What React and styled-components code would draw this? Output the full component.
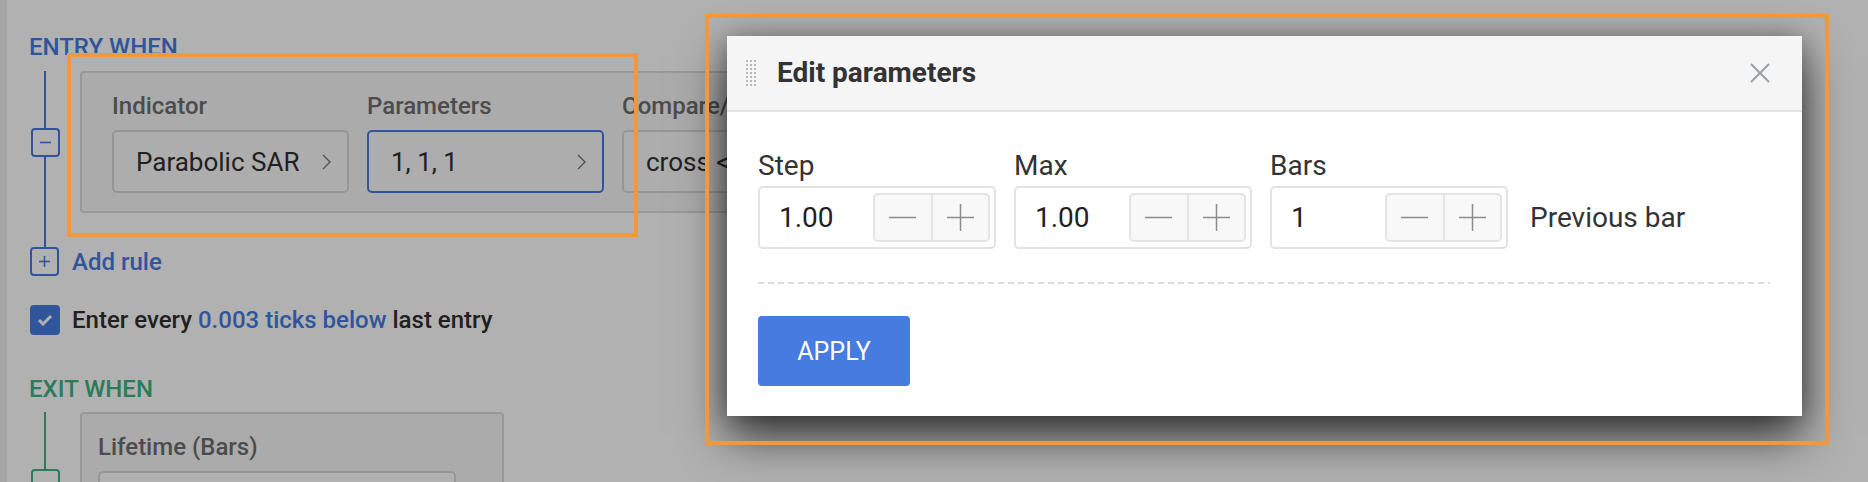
import React from 'react';
import styled, { createGlobalStyle } from 'styled-components';

const BLUE = '#467be0';
const GREEN = '#40b381';
const ORANGE = '#f2973a';

const GlobalStyle = createGlobalStyle`
  html, body { margin: 0; padding: 0; }
  body {
    width: 1868px;
    height: 482px;
    overflow: hidden;
    background: #fff;
    font-family: Roboto, "Noto Sans", "Liberation Sans", Arial, sans-serif;
  }
  #root { height: 482px; }
  * { box-sizing: border-box; }
`;

const Page = styled.div`
  position: relative;
  display: flex;
  width: 1868px;
  height: 482px;
  overflow: hidden;
  background: #fff;
`;

const SideStrip = styled.div`
  width: 7px;
  flex: none;
  background: #efefef;
`;

const Builder = styled.main`
  flex: 1;
  display: flex;
  flex-direction: column;
  padding: 33px 0 0 22px;
`;

const SectionTitle = styled.h2`
  margin: ${p => p.$mt || 0}px 0 0;
  font-size: 24px;
  line-height: 28px;
  font-weight: 500;
  text-transform: uppercase;
  color: ${p => p.$color};
`;

const Tree = styled.div`
  display: flex;
  flex-direction: column;
  margin: ${p => p.$mt}px 0 0 1px;
`;

const RuleRow = styled.div`
  display: flex;
  align-items: stretch;
  gap: 20px;
`;

const Rail = styled.div`
  width: 30px;
  flex: none;
  display: flex;
  flex-direction: column;
  align-items: center;
  height: ${p => (p.$h ? `${p.$h}px` : 'auto')};
`;

const Segment = styled.div`
  width: 2px;
  flex: 1;
  background: ${p => p.$color};
`;

const ToggleBox = styled.div`
  width: 29px;
  height: 29px;
  flex: none;
  border: 2px solid ${p => p.$color};
  border-radius: 4px;
  background: #fff;
  display: flex;
  align-items: center;
  justify-content: center;
`;

const Card = styled.div`
  display: flex;
  gap: 18px;
  width: ${p => (p.$w ? `${p.$w}px` : 'auto')};
  padding: 19px ${p => p.$px}px 18px;
  border: 2px solid #dcdcdc;
  border-radius: 4px;
  background: #f7f7f7;
`;

const Field = styled.div`
  display: flex;
  flex-direction: column;
  gap: 10px;
  width: ${p => p.$w}px;
  flex: none;
`;

const FieldLabel = styled.div`
  font-size: 24px;
  line-height: 28px;
  font-weight: 500;
  color: #6e6e6e;
  white-space: nowrap;
`;

const SelectButton = styled.div`
  height: 63px;
  display: flex;
  align-items: center;
  justify-content: space-between;
  padding: 0 16px 0 22px;
  border: 2px solid ${p => (p.$active ? BLUE : '#d9d9d9')};
  border-radius: 5px;
  background: #fafafa;
  font-size: 26px;
  color: #303030;
  white-space: nowrap;
  overflow: hidden;
`;

const TextInput = styled.div`
  height: 63px;
  border: 2px solid #d9d9d9;
  border-radius: 5px;
  background: #fff;
`;

const AddRow = styled.div`
  display: flex;
  align-items: center;
  gap: 13px;
`;

const LinkLabel = styled.span`
  font-size: 24px;
  line-height: 28px;
  font-weight: 500;
  color: ${BLUE};
`;

const CheckRow = styled.div`
  display: flex;
  align-items: center;
  gap: 12px;
  margin: 29px 0 0 1px;
`;

const CheckBox = styled.div`
  width: 30px;
  height: 30px;
  border-radius: 4px;
  background: ${BLUE};
  display: flex;
  align-items: center;
  justify-content: center;
`;

const CheckText = styled.span`
  font-size: 24px;
  line-height: 28px;
  font-weight: 500;
  color: #303030;
`;

const Accent = styled.span`
  color: ${BLUE};
`;

const Overlay = styled.div`
  position: absolute;
  inset: 0;
  background: rgba(0, 0, 0, 0.305);
`;

const Modal = styled.section`
  position: absolute;
  left: 727px;
  top: 36px;
  width: 1075px;
  background: #fff;
  box-shadow: 0 20px 44px rgba(0, 0, 0, 0.72), 0 0 20px rgba(0, 0, 0, 0.22);
`;

const ModalHeader = styled.header`
  height: 76px;
  display: flex;
  align-items: center;
  padding: 0 32px 0 19px;
  background: #f5f5f5;
  border-bottom: 2px solid #e2e2e2;
`;

const ModalTitle = styled.h3`
  margin: 0 0 0 21px;
  font-size: 28px;
  line-height: 34px;
  font-weight: 700;
  color: #333;
`;

const CloseButton = styled.button`
  margin-left: auto;
  width: 20px;
  height: 20px;
  padding: 0;
  border: 0;
  background: none;
  display: flex;
`;

const ModalBody = styled.div`
  padding: 37px 32px 30px 31px;
`;

const ParamRow = styled.div`
  display: flex;
  align-items: flex-end;
  gap: 18px;
`;

const ParamField = styled.div`
  display: flex;
  flex-direction: column;
  gap: 4px;
  width: 238px;
`;

const ParamLabel = styled.label`
  font-size: 28px;
  line-height: 33px;
  color: #333;
`;

const NumberBox = styled.div`
  height: 63px;
  display: flex;
  align-items: center;
  justify-content: space-between;
  padding: 0 4px 0 19px;
  border: 2px solid #e2e2e2;
  border-radius: 5px;
`;

const NumberValue = styled.span`
  font-size: 28px;
  color: #222;
`;

const Stepper = styled.div`
  width: 117px;
  height: 49px;
  display: flex;
  border: 2px solid #e4e4e4;
  border-radius: 5px;
  background: #f8f8f8;
  overflow: hidden;
`;

const StepButton = styled.div`
  flex: 1;
  display: flex;
  align-items: center;
  justify-content: center;
  & + & {
    border-left: 2px solid #e4e4e4;
  }
`;

const Hint = styled.span`
  height: 63px;
  line-height: 63px;
  margin-left: 4px;
  font-size: 28px;
  color: #333;
`;

const Divider = styled.div`
  height: 2px;
  margin: 33px 0 32px;
  background: repeating-linear-gradient(to right, #dcdcdc 0 6px, transparent 6px 10px);
`;

const ApplyButton = styled.button`
  width: 152px;
  height: 70px;
  border: 0;
  border-radius: 4px;
  background: ${BLUE};
  color: #fff;
  font-family: inherit;
  font-size: 25px;
  font-weight: 400;
  padding: 0;
`;

const Highlight = styled.div`
  position: absolute;
  left: ${p => p.$x}px;
  top: ${p => p.$y}px;
  width: ${p => p.$w}px;
  height: ${p => p.$h}px;
  border: 4px solid ${ORANGE};
  pointer-events: none;
`;

const Chevron = () => (
  <svg width="9" height="16" viewBox="0 0 9 16" fill="none">
    <polyline points="1,1 8,8 1,15" stroke="#777" strokeWidth="1.4" />
  </svg>
);

const MinusGlyph = ({ color, size = 11 }) => (
  <svg width={size} height={size} viewBox="0 0 11 11">
    <line x1="0" y1="5.5" x2="11" y2="5.5" stroke={color} strokeWidth="1.6" />
  </svg>
);

const PlusGlyph = ({ color, size = 11 }) => (
  <svg width={size} height={size} viewBox="0 0 11 11">
    <line x1="0" y1="5.5" x2="11" y2="5.5" stroke={color} strokeWidth="1.6" />
    <line x1="5.5" y1="0" x2="5.5" y2="11" stroke={color} strokeWidth="1.6" />
  </svg>
);

const StepMinus = () => (
  <svg width="27" height="27" viewBox="0 0 27 27">
    <line x1="0" y1="13.5" x2="27" y2="13.5" stroke="#8c8c8c" strokeWidth="1.5" />
  </svg>
);

const StepPlus = () => (
  <svg width="27" height="27" viewBox="0 0 27 27">
    <line x1="0" y1="13.5" x2="27" y2="13.5" stroke="#8c8c8c" strokeWidth="1.5" />
    <line x1="13.5" y1="0" x2="13.5" y2="27" stroke="#8c8c8c" strokeWidth="1.5" />
  </svg>
);

const DragHandle = () => (
  <svg width="10" height="26" viewBox="0 0 10 26">
    {[0, 1, 2, 3, 4, 5, 6].map(r =>
      [0, 1, 2].map(c => (
        <rect key={`${r}-${c}`} x={c * 4} y={r * 4} width="2" height="2" fill="#b9b9b9" />
      ))
    )}
  </svg>
);

const CloseIcon = () => (
  <svg width="20" height="20" viewBox="0 0 20 20">
    <line x1="1" y1="1" x2="19" y2="19" stroke="#9aa0a6" strokeWidth="2.2" />
    <line x1="19" y1="1" x2="1" y2="19" stroke="#9aa0a6" strokeWidth="2.2" />
  </svg>
);

const CheckIcon = () => (
  <svg width="16" height="12" viewBox="0 0 16 12">
    <polyline points="2,6 6,10 14,2" fill="none" stroke="#fff" strokeWidth="3" />
  </svg>
);

const params = [
  { label: 'Step', value: '1.00' },
  { label: 'Max', value: '1.00' },
  { label: 'Bars', value: '1' },
];

export default function App() {
  return (
    <>
      <GlobalStyle />
      <Page>
        <SideStrip />
        <Builder>
          <SectionTitle $color={BLUE}>Entry when</SectionTitle>
          <Tree $mt={10}>
            <RuleRow>
              <Rail>
                <Segment $color={BLUE} />
                <ToggleBox $color={BLUE}>
                  <MinusGlyph color={BLUE} />
                </ToggleBox>
                <Segment $color={BLUE} />
              </Rail>
              <Card $px={30}>
                <Field $w={237}>
                  <FieldLabel>Indicator</FieldLabel>
                  <SelectButton>
                    <span>Parabolic SAR</span>
                    <Chevron />
                  </SelectButton>
                </Field>
                <Field $w={237}>
                  <FieldLabel>Parameters</FieldLabel>
                  <SelectButton $active>
                    <span>1, 1, 1</span>
                    <Chevron />
                  </SelectButton>
                </Field>
                <Field $w={237}>
                  <FieldLabel>Compare/Value</FieldLabel>
                  <SelectButton>
                    <span>cross &lt;</span>
                    <Chevron />
                  </SelectButton>
                </Field>
              </Card>
            </RuleRow>
            <Rail $h={34}>
              <Segment $color={BLUE} />
            </Rail>
            <AddRow>
              <ToggleBox $color={BLUE}>
                <PlusGlyph color={BLUE} />
              </ToggleBox>
              <LinkLabel>Add rule</LinkLabel>
            </AddRow>
          </Tree>
          <CheckRow>
            <CheckBox>
              <CheckIcon />
            </CheckBox>
            <CheckText>
              Enter every <Accent>0.003 ticks below</Accent> last entry
            </CheckText>
          </CheckRow>
          <SectionTitle $color={GREEN} $mt={40}>Exit when</SectionTitle>
          <Tree $mt={9}>
            <RuleRow>
              <Rail>
                <Segment $color={GREEN} />
                <ToggleBox $color={GREEN}>
                  <MinusGlyph color={GREEN} />
                </ToggleBox>
                <Segment $color={GREEN} />
              </Rail>
              <Card $px={16} $w={424}>
                <Field $w={358}>
                  <FieldLabel>Lifetime (Bars)</FieldLabel>
                  <TextInput />
                </Field>
              </Card>
            </RuleRow>
          </Tree>
        </Builder>

        <Overlay />
        <Highlight $x={67} $y={53} $w={571} $h={184} />

        <Modal>
          <ModalHeader>
            <DragHandle />
            <ModalTitle>Edit parameters</ModalTitle>
            <CloseButton aria-label="Close">
              <CloseIcon />
            </CloseButton>
          </ModalHeader>
          <ModalBody>
            <ParamRow>
              {params.map(p => (
                <ParamField key={p.label}>
                  <ParamLabel>{p.label}</ParamLabel>
                  <NumberBox>
                    <NumberValue>{p.value}</NumberValue>
                    <Stepper>
                      <StepButton>
                        <StepMinus />
                      </StepButton>
                      <StepButton>
                        <StepPlus />
                      </StepButton>
                    </Stepper>
                  </NumberBox>
                </ParamField>
              ))}
              <Hint>Previous bar</Hint>
            </ParamRow>
            <Divider />
            <ApplyButton>APPLY</ApplyButton>
          </ModalBody>
        </Modal>
        <Highlight $x={705} $y={14} $w={1124} $h={431} />
      </Page>
    </>
  );
}
